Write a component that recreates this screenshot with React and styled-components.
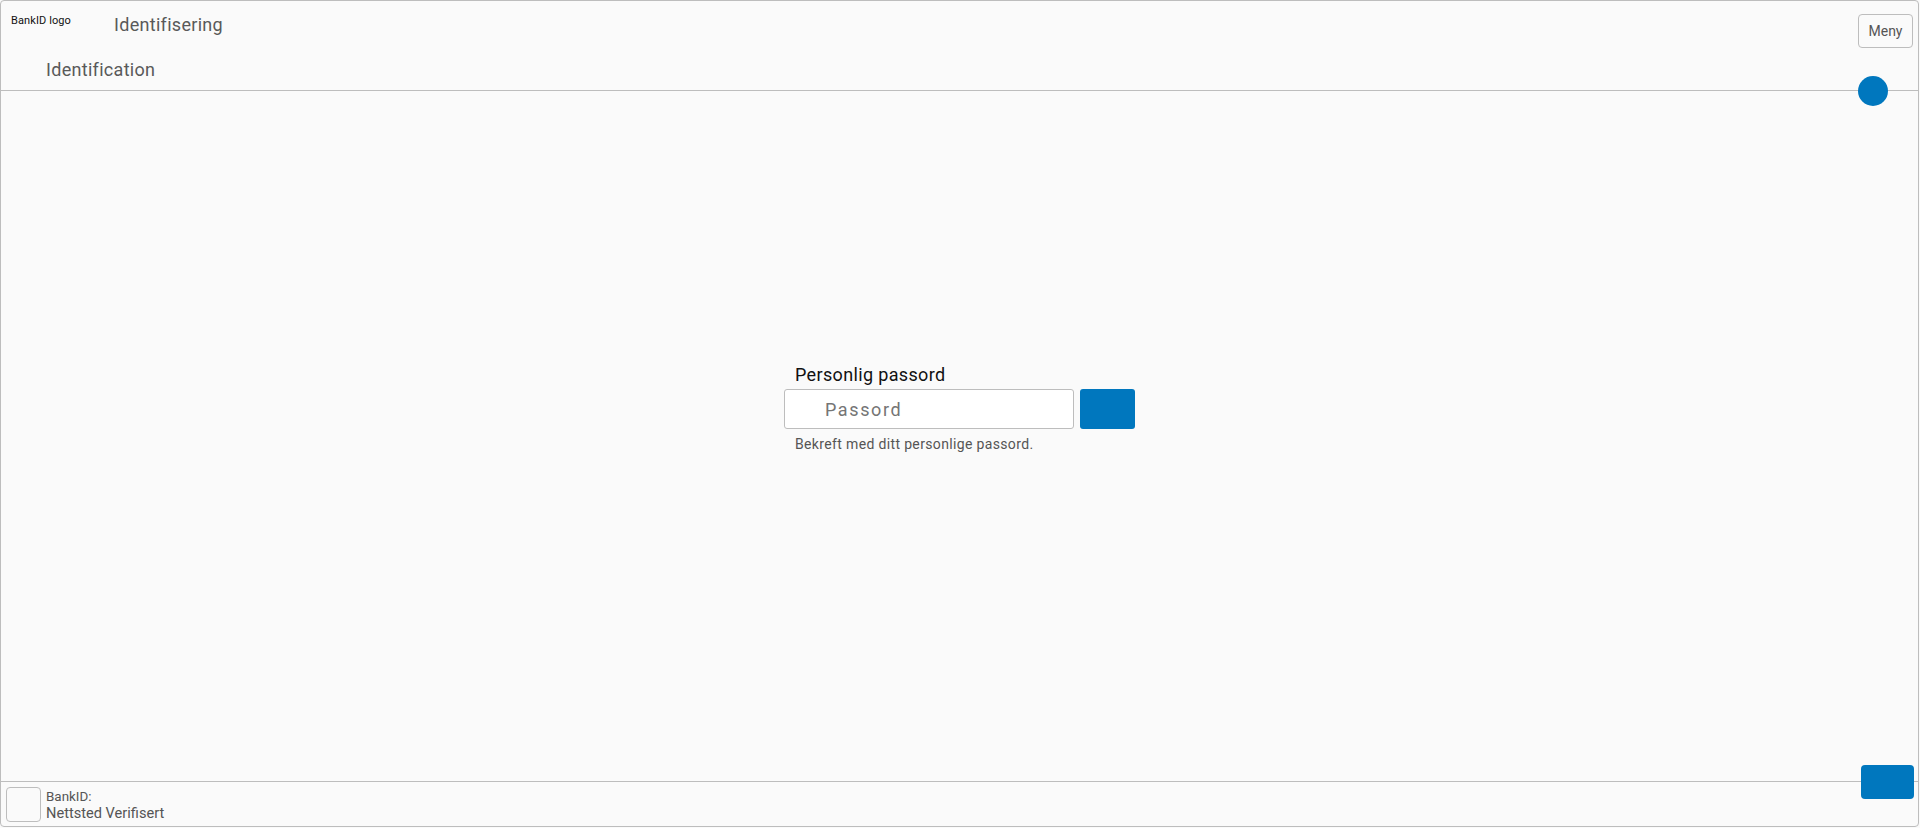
import React from "react";
import styled, { createGlobalStyle } from "styled-components";

const Global = createGlobalStyle`
  * { box-sizing: border-box; }
  html, body { margin: 0; padding: 0; background: #fafafa; }
  body { font-family: Roboto, "Liberation Sans", Arial, sans-serif; }
`;

const Frame = styled.div`
  position: relative;
  width: 1919px;
  height: 827px;
  border: 1px solid #bdbdbd;
  border-radius: 4px;
  background: #fafafa;
  display: flex;
  flex-direction: column;
  overflow: hidden;
`;

const Header = styled.header`
  position: relative;
  height: 90px;
  border-bottom: 1px solid #bdbdbd;
  display: flex;
  flex-direction: column;
`;

const TopRow = styled.div`
  display: flex;
  align-items: flex-start;
  height: 58px;
`;

const Logo = styled.div`
  font-size: 11px;
  color: #111;
  padding: 13px 0 0 10px;
  width: 113px;
  letter-spacing: 0.1px;
`;

const Title = styled.h1`
  margin: 0;
  padding-top: 13px;
  font-size: 18px;
  font-weight: 400;
  color: #595959;
  letter-spacing: 0.3px;
  flex: 1;
`;

const MenuButton = styled.button`
  margin: 13px 5px 0 0;
  width: 55px;
  height: 34px;
  border: 1px solid #bdbdbd;
  border-radius: 4px;
  background: #fafafa;
  font-family: inherit;
  font-size: 14px;
  color: #555;
  padding: 0;
`;

const SubTitle = styled.h2`
  margin: 0;
  padding-left: 45px;
  font-size: 18px;
  font-weight: 400;
  color: #595959;
  letter-spacing: 0.3px;
`;

const Dot = styled.span`
  position: absolute;
  right: 30px;
  bottom: -16px;
  width: 30px;
  height: 30px;
  border-radius: 50%;
  background: #0077be;
`;

const Main = styled.main`
  flex: 1;
  display: flex;
  justify-content: center;
  padding-top: 273px;
`;

const Group = styled.div`
  display: flex;
  flex-direction: column;
`;

const Label = styled.label`
  font-size: 18px;
  color: #111;
  padding-left: 11px;
  margin-bottom: 4px;
  letter-spacing: 0.35px;
`;

const FieldRow = styled.div`
  display: flex;
  gap: 6px;
`;

const Input = styled.input`
  width: 290px;
  height: 40px;
  border: 1px solid #bdbdbd;
  border-radius: 3px;
  background: #fff;
  padding: 0 0 0 40px;
  font-family: inherit;
  font-size: 18px;
  letter-spacing: 1.6px;
  color: #333;
  outline: none;
  &::placeholder { color: #757575; }
`;

const Submit = styled.button`
  width: 55px;
  height: 40px;
  border: none;
  border-radius: 3px;
  background: #0077be;
`;

const Helper = styled.p`
  margin: 7px 0 0;
  padding-left: 11px;
  font-size: 14px;
  color: #555;
  letter-spacing: 0.35px;
`;

const Footer = styled.footer`
  position: relative;
  height: 45px;
  border-top: 1px solid #bdbdbd;
  display: flex;
  align-items: center;
  gap: 5px;
  padding-left: 5px;
`;

const Badge = styled.div`
  width: 35px;
  height: 35px;
  border: 1px solid #bdbdbd;
  border-radius: 4px;
  background: #fafafa;
`;

const FooterText = styled.div`
  display: flex;
  flex-direction: column;
  color: #555;
  padding-top: 3px;
`;

const Small = styled.span`
  font-size: 13.4px;
  line-height: 16px;
`;

const Verified = styled.span`
  font-size: 14.6px;
  line-height: 17px;
`;

const Corner = styled.button`
  position: absolute;
  right: 4px;
  top: -17px;
  width: 53px;
  height: 34px;
  border: none;
  border-radius: 4px;
  background: #0077be;
`;

export default function App() {
  return (
    <>
      <Global />
      <Frame>
        <Header>
          <TopRow>
            <Logo>BankID logo</Logo>
            <Title>Identifisering</Title>
            <MenuButton>Meny</MenuButton>
          </TopRow>
          <SubTitle>Identification</SubTitle>
          <Dot />
        </Header>
        <Main>
          <Group>
            <Label htmlFor="pw">Personlig passord</Label>
            <FieldRow>
              <Input id="pw" type="password" placeholder="Passord" />
              <Submit aria-label="Neste" />
            </FieldRow>
            <Helper>Bekreft med ditt personlige passord.</Helper>
          </Group>
        </Main>
        <Footer>
          <Badge />
          <FooterText>
            <Small>BankID:</Small>
            <Verified>Nettsted Verifisert</Verified>
          </FooterText>
          <Corner aria-label="Handling" />
        </Footer>
      </Frame>
    </>
  );
}
